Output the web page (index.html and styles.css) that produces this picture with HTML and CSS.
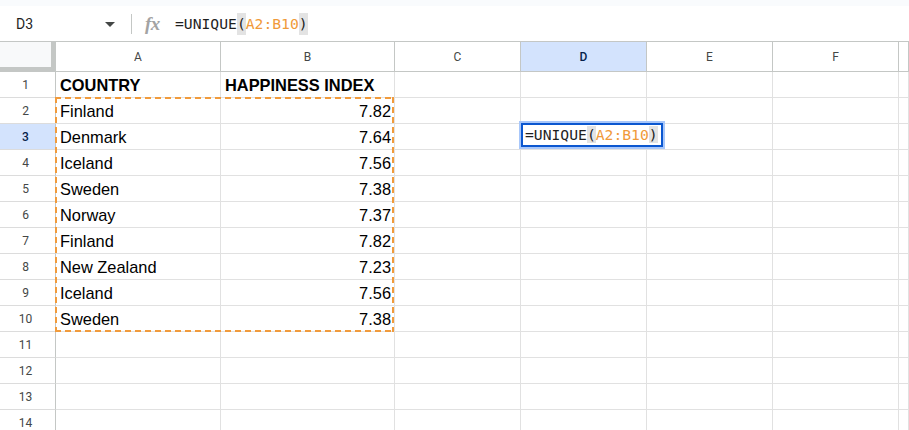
FILE: index.html
```html
<!DOCTYPE html>
<html>
<head>
<meta charset="utf-8">
<link rel="stylesheet" href="styles.css">
</head>
<body>
<div class="topstrip"></div>
<div class="fbar">
  <div class="namebox">
    <span class="cellref">D3</span>
    <svg class="caret" width="10" height="5" viewBox="0 0 10 5"><polygon points="0,0 10,0 5,5" fill="#444746"/></svg>
  </div>
  <div class="sep"></div>
  <span class="fx">fx</span>
  <div class="formula"><span class="fn">=UNIQUE</span><span class="par">(</span><span class="rng">A2:B10</span><span class="par">)</span></div>
</div>
<div class="sheet">
  <div class="grid">
    <div class="corner"></div>
    <div class="ch">A</div><div class="ch">B</div><div class="ch">C</div><div class="ch sel">D</div><div class="ch">E</div><div class="ch">F</div><div class="ch"></div>

    <div class="rh">1</div><div class="c b">COUNTRY</div><div class="c b">HAPPINESS INDEX</div><div class="c"></div><div class="c"></div><div class="c"></div><div class="c"></div><div class="c"></div>
    <div class="rh">2</div><div class="c">Finland</div><div class="c n">7.82</div><div class="c"></div><div class="c"></div><div class="c"></div><div class="c"></div><div class="c"></div>
    <div class="rh sel">3</div><div class="c">Denmark</div><div class="c n">7.64</div><div class="c"></div><div class="c"></div><div class="c"></div><div class="c"></div><div class="c"></div>
    <div class="rh">4</div><div class="c">Iceland</div><div class="c n">7.56</div><div class="c"></div><div class="c"></div><div class="c"></div><div class="c"></div><div class="c"></div>
    <div class="rh">5</div><div class="c">Sweden</div><div class="c n">7.38</div><div class="c"></div><div class="c"></div><div class="c"></div><div class="c"></div><div class="c"></div>
    <div class="rh">6</div><div class="c">Norway</div><div class="c n">7.37</div><div class="c"></div><div class="c"></div><div class="c"></div><div class="c"></div><div class="c"></div>
    <div class="rh">7</div><div class="c">Finland</div><div class="c n">7.82</div><div class="c"></div><div class="c"></div><div class="c"></div><div class="c"></div><div class="c"></div>
    <div class="rh">8</div><div class="c">New Zealand</div><div class="c n">7.23</div><div class="c"></div><div class="c"></div><div class="c"></div><div class="c"></div><div class="c"></div>
    <div class="rh">9</div><div class="c">Iceland</div><div class="c n">7.56</div><div class="c"></div><div class="c"></div><div class="c"></div><div class="c"></div><div class="c"></div>
    <div class="rh">10</div><div class="c">Sweden</div><div class="c n">7.38</div><div class="c"></div><div class="c"></div><div class="c"></div><div class="c"></div><div class="c"></div>
    <div class="rh">11</div><div class="c"></div><div class="c"></div><div class="c"></div><div class="c"></div><div class="c"></div><div class="c"></div><div class="c"></div>
    <div class="rh">12</div><div class="c"></div><div class="c"></div><div class="c"></div><div class="c"></div><div class="c"></div><div class="c"></div><div class="c"></div>
    <div class="rh">13</div><div class="c"></div><div class="c"></div><div class="c"></div><div class="c"></div><div class="c"></div><div class="c"></div><div class="c"></div>
    <div class="rh">14</div><div class="c"></div><div class="c"></div><div class="c"></div><div class="c"></div><div class="c"></div><div class="c"></div><div class="c"></div>
  </div>
  <div class="copyrange"></div>
  <div class="editor"><span class="fn">=UNIQUE</span><span class="par">(</span><span class="rng">A2:B10</span><span class="par">)</span></div>
</div>
</body>
</html>
```
FILE: styles.css
```css
html, body {
  margin: 0;
  padding: 0;
  background: #ffffff;
  overflow: hidden;
}
body {
  width: 909px;
  height: 430px;
  font-family: "Liberation Sans", Arial, sans-serif;
}
.topstrip {
  height: 6px;
  background: #f9fbfd;
}
.fbar {
  height: 35px;
  border-bottom: 1px solid #c4c7c5;
  display: flex;
  align-items: center;
  background: #ffffff;
}
.namebox {
  width: 131px;
  box-sizing: border-box;
  padding-left: 16px;
  padding-right: 16px;
  display: flex;
  align-items: center;
  justify-content: space-between;
}
.cellref {
  font-family: Roboto, "Liberation Sans", sans-serif;
  font-size: 14px;
  color: #1f1f1f;
}
.caret {
  display: block;
  margin-top: 1px;
}
.sep {
  width: 1px;
  height: 20px;
  background: #c4c7c5;
}
.fx {
  margin-left: 13px;
  width: 18px;
  font-family: "Liberation Serif", serif;
  font-style: italic;
  font-weight: bold;
  font-size: 19px;
  color: #a3a3a3;
  line-height: 20px;
  letter-spacing: -0.5px;
}
.formula {
  margin-left: 12px;
  font-family: "DejaVu Sans Mono", monospace;
  font-size: 14.7px;
  line-height: 22px;
  color: #1f1f1f;
  display: flex;
  align-items: center;
}
.formula .par {
  display: inline-block;
  height: 22px;
  line-height: 22px;
}
.par { background: #e3e3e3; }
.rng { color: #f09a3a; }

.sheet {
  position: relative;
}
.grid {
  display: grid;
  grid-template-columns: 56px 165px 174px 126px 126px 126px 126px 10px;
  grid-template-rows: 30px;
  grid-auto-rows: 26px;
}
.grid > div {
  box-sizing: border-box;
  border-right: 1px solid #e1e1e1;
  border-bottom: 1px solid #e1e1e1;
  overflow: hidden;
  white-space: nowrap;
}
.grid > .corner {
  background: #f8f9fa;
  border-right: 5px solid #c4c7c5;
  border-bottom: 5px solid #c4c7c5;
}
.grid > .ch {
  border-right: 1px solid #c4c7c5;
  border-bottom: 1px solid #c4c7c5;
  font-family: Roboto, "Liberation Sans", sans-serif;
  font-size: 12px;
  color: #444746;
  display: flex;
  align-items: center;
  justify-content: center;
  padding-top: 1px;
}
.grid > .rh {
  border-right: 1px solid #c4c7c5;
  border-bottom: 1px solid #dcdcdc;
  font-family: Roboto, "Liberation Sans", sans-serif;
  font-size: 12px;
  color: #444746;
  display: flex;
  align-items: center;
  justify-content: center;
  padding-right: 4px;
}
.grid > .sel {
  background: #d3e3fd;
  color: #041e49;
  font-weight: 500;
}
.c {
  font-size: 16.4px;
  color: #000000;
  line-height: 27px;
  padding: 0 3px 0 4px;
}
.c.b { font-weight: bold; }
.c.n { text-align: right; }

.copyrange {
  position: absolute;
  left: 55px;
  top: 55px;
  width: 339px;
  height: 235px;
  background:
    repeating-linear-gradient(90deg, #f19b3c 0 6px, transparent 6px 10px) left top / 100% 2px no-repeat,
    repeating-linear-gradient(90deg, #f19b3c 0 6px, transparent 6px 10px) left bottom / 100% 2px no-repeat,
    repeating-linear-gradient(180deg, #f19b3c 0 6px, transparent 6px 10px) left top / 2px 100% no-repeat,
    repeating-linear-gradient(180deg, #f19b3c 0 6px, transparent 6px 10px) right top / 2px 100% no-repeat;
  pointer-events: none;
}
.editor {
  position: absolute;
  left: 521px;
  top: 81px;
  width: 142px;
  height: 24px;
  box-sizing: border-box;
  border: 2px solid #0b57d0;
  box-shadow: 0 0 0 2px #a8c7fa;
  background: #ffffff;
  padding-left: 2px;
  font-family: "DejaVu Sans Mono", monospace;
  font-size: 14.7px;
  line-height: 20px;
  color: #1f1f1f;
  white-space: nowrap;
}
```
